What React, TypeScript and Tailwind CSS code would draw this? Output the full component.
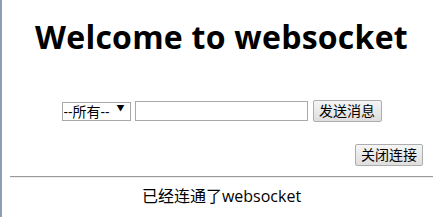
import { useState } from "react";

const font = '"Open Sans", "Noto Sans CJK SC", sans-serif';

export default function App() {
  const [target, setTarget] = useState("all");
  const [message, setMessage] = useState("");

  return (
    <div className="flex h-[217px] w-[441px] flex-col border-l-2 border-[#8e9db3] bg-white text-black" style={{ fontFamily: font }}>
      <h1 className="mt-[19px] text-center text-[32px] font-bold leading-[36px] tracking-[0.25px]">Welcome to websocket</h1>

      <div className="mt-[45px] flex items-center justify-center gap-[4px]">
        <div className="relative h-[19px] w-[69px]">
          <select
            value={target}
            onChange={(e) => setTarget(e.target.value)}
            className="block h-full w-full appearance-none border border-[#a9a9a9] bg-white py-0 pl-[1px] text-[14px] leading-[17px] text-black"
          >
            <option value="all">--所有--</option>
          </select>
          <span className="pointer-events-none absolute right-[6px] top-[2px] text-[8px] leading-[8px]">▼</span>
        </div>
        <input
          value={message}
          onChange={(e) => setMessage(e.target.value)}
          className="h-[20px] w-[173px] border border-[#a9a9a9] bg-white outline-none"
        />
        <button className="ml-[1px] h-[22px] w-[69px] rounded-[2px] border border-[#adadad] bg-gradient-to-b from-[#f5f5f5] to-[#dedede] text-[14px] leading-[18px]">
          发送消息
        </button>
      </div>

      <div className="mr-[18px] mt-[22px] flex justify-end">
        <button className="h-[22px] w-[68px] rounded-[2px] border border-[#adadad] bg-gradient-to-b from-[#f5f5f5] to-[#dedede] text-[14px] leading-[18px]">
          关闭连接
        </button>
      </div>

      <hr className="mx-[8px] mt-[10px] border-t-[1px] border-b-[1px] border-t-[#9a9a9a] border-b-[#eeeeee]" />

      <p className="mt-[8px] text-center text-[16px] leading-[20px]">已经连通了websocket</p>
    </div>
  );
}
